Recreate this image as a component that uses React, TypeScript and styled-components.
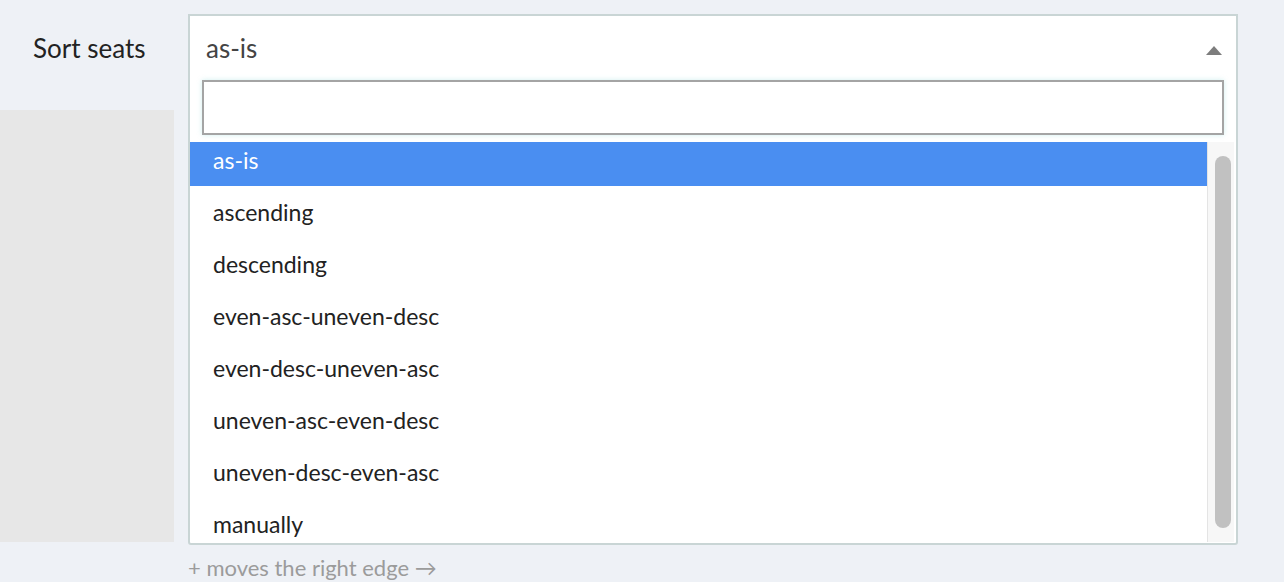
import React from "react";
import styled, { createGlobalStyle } from "styled-components";

const GlobalStyle = createGlobalStyle`
  html, body {
    margin: 0;
    padding: 0;
    background: #eef1f6;
    font-family: Lato, "Open Sans", sans-serif;
  }
`;

const Page = styled.div`
  display: grid;
  grid-template-columns: 174px 1050px;
  column-gap: 14px;
  height: 582px;
  overflow: hidden;
`;

const LeftColumn = styled.div`
  display: flex;
  flex-direction: column;
`;

const Label = styled.div`
  height: 110px;
  padding: 32px 0 0 33px;
  box-sizing: border-box;
  font-size: 26px;
  color: #222;
`;

const GreyBlock = styled.div`
  width: 174px;
  height: 432px;
  background: #e7e7e7;
`;

const SelectColumn = styled.div`
  padding-top: 14px;
  display: flex;
  flex-direction: column;
`;

const SelectBox = styled.div`
  height: 531px;
  box-sizing: border-box;
  border: 2px solid #c9d5d5;
  border-radius: 0 0 3px 3px;
  background: #fff;
  display: flex;
  flex-direction: column;
`;

const Current = styled.div`
  height: 64px;
  display: flex;
  align-items: center;
  justify-content: space-between;
  padding: 0 14px 0 16px;
  font-size: 26px;
  color: #444;
`;

const Arrow = styled.span`
  width: 0;
  height: 0;
  border-left: 8px solid transparent;
  border-right: 8px solid transparent;
  border-bottom: 9px solid #7d7d7d;
  margin-top: 4px;
`;

const SearchWrap = styled.div`
  padding: 0 12px;
`;

const SearchInput = styled.input`
  display: block;
  width: 100%;
  height: 55px;
  box-sizing: border-box;
  border: 2px solid #a4a4a4;
  box-shadow: 0 0 5px rgba(120, 210, 210, 0.35);
  outline: none;
  font-size: 20px;
  font-family: inherit;
`;

const Results = styled.div`
  margin-top: 7px;
  height: 400px;
  display: flex;
  overflow: hidden;
`;

const List = styled.ul`
  flex: 1;
  list-style: none;
  margin: -8px 0 0 0;
  padding: 0;
`;

const Option = styled.li<{ $active?: boolean }>`
  height: 52px;
  display: flex;
  align-items: center;
  padding-left: 23px;
  font-size: 23px;
  color: ${(p) => (p.$active ? "#fff" : "#222")};
  background: ${(p) => (p.$active ? "#4a8ef1" : "transparent")};
`;

const Track = styled.div`
  width: 27px;
  margin-right: 2px;
  background: #f7f7f7;
  border-left: 1px solid #e4e4e4;
  padding: 14px 0 0 7px;
  box-sizing: border-box;
`;

const Thumb = styled.div`
  width: 16px;
  height: 372px;
  border-radius: 8px;
  background: #c1c1c1;
`;

const Hint = styled.div`
  margin-top: 9px;
  font-size: 22px;
  color: #9b9b9b;
`;

const options = [
  "as-is",
  "ascending",
  "descending",
  "even-asc-uneven-desc",
  "even-desc-uneven-asc",
  "uneven-asc-even-desc",
  "uneven-desc-even-asc",
  "manually",
];

const App: React.FC = () => {
  return (
    <>
      <GlobalStyle />
      <Page>
        <LeftColumn>
          <Label>Sort seats</Label>
          <GreyBlock />
        </LeftColumn>
        <SelectColumn>
          <SelectBox>
            <Current>
              as-is
              <Arrow />
            </Current>
            <SearchWrap>
              <SearchInput type="text" />
            </SearchWrap>
            <Results>
              <List>
                {options.map((o, i) => (
                  <Option key={o} $active={i === 0}>
                    {o}
                  </Option>
                ))}
              </List>
              <Track>
                <Thumb />
              </Track>
            </Results>
          </SelectBox>
          <Hint>+ moves the right edge →</Hint>
        </SelectColumn>
      </Page>
    </>
  );
};

export default App;
